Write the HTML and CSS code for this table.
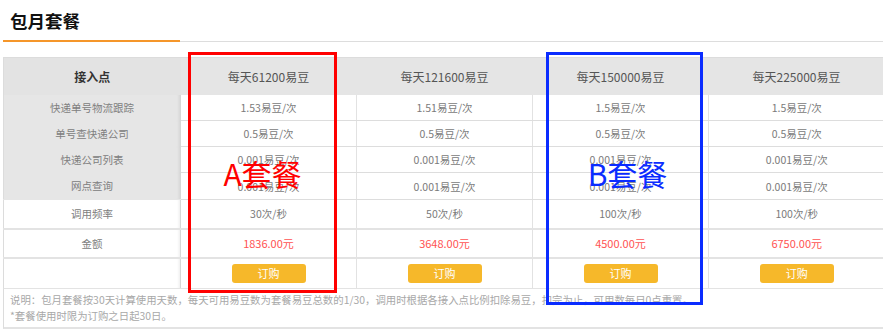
FILE: index.html
```html
<!DOCTYPE html>
<html lang="zh-CN">
<head>
<meta charset="utf-8">
<title>包月套餐</title>
<link rel="stylesheet" href="styles.css">
</head>
<body>
<div class="page">
  <div class="title-bar">
    <h2 class="title">包月套餐</h2>
  </div>
  <div class="plans">
    <table class="plan-table">
      <colgroup>
        <col class="c-label"><col class="c-plan"><col class="c-plan"><col class="c-plan"><col class="c-last">
      </colgroup>
      <thead>
        <tr class="head-row">
          <th class="label head-label">接入点</th>
          <th>每天61200易豆</th>
          <th>每天121600易豆</th>
          <th>每天150000易豆</th>
          <th>每天225000易豆</th>
        </tr>
      </thead>
      <tbody>
        <tr class="r-grey r1">
          <td class="label grey">快递单号物流跟踪</td>
          <td>1.53易豆/次</td><td>1.51易豆/次</td><td>1.5易豆/次</td><td>1.5易豆/次</td>
        </tr>
        <tr class="r-grey">
          <td class="label grey">单号查快递公司</td>
          <td>0.5易豆/次</td><td>0.5易豆/次</td><td>0.5易豆/次</td><td>0.5易豆/次</td>
        </tr>
        <tr class="r-grey">
          <td class="label grey">快递公司列表</td>
          <td>0.001易豆/次</td><td>0.001易豆/次</td><td>0.001易豆/次</td><td>0.001易豆/次</td>
        </tr>
        <tr class="r-grey r4">
          <td class="label grey">网点查询</td>
          <td>0.001易豆/次</td><td>0.001易豆/次</td><td>0.001易豆/次</td><td>0.001易豆/次</td>
        </tr>
        <tr class="r-white">
          <td class="label">调用频率</td>
          <td>30次/秒</td><td>50次/秒</td><td>100次/秒</td><td>100次/秒</td>
        </tr>
        <tr class="r-white">
          <td class="label">金额</td>
          <td class="price">1836.00元</td><td class="price">3648.00元</td><td class="price">4500.00元</td><td class="price">6750.00元</td>
        </tr>
        <tr class="r-white r-btn">
          <td class="label"></td>
          <td><button class="buy">订购</button></td>
          <td><button class="buy">订购</button></td>
          <td><button class="buy">订购</button></td>
          <td><button class="buy">订购</button></td>
        </tr>
      </tbody>
    </table>
    <div class="note">
      <p>说明：包月套餐按30天计算使用天数，每天可用易豆数为套餐易豆总数的1/30，调用时根据各接入点比例扣除易豆，扣完为止，可用数每日0点重置。</p>
      <p>*套餐使用时限为订购之日起30日。</p>
    </div>
    <div class="mark mark-a"><span>A套餐</span></div>
    <div class="mark mark-b"><span>B套餐</span></div>
  </div>
</div>
</body>
</html>
```

FILE: styles.css
```css
* { box-sizing: border-box; }
html, body { margin: 0; padding: 0; background: #fff; }
body {
  font-family: "Noto Sans CJK SC", "Noto Sans", sans-serif;
  color: #666;
}
.page {
  width: 883px;
  padding-left: 3px;
  overflow: hidden;
}
.title-bar {
  border-bottom: 1px solid #dddddd;
  height: 42px;
  display: flex;
}
.title {
  margin: 0 0 -1px 0;
  width: 177px;
  height: 42px;
  padding: 9px 0 0 7px;
  font-size: 17.5px;
  font-weight: bold;
  line-height: 24px;
  color: #111;
  border-bottom: 2px solid #f5962a;
}
.plans {
  position: relative;
  margin-top: 15px;
}
.plan-table {
  width: 881px;
  border-collapse: collapse;
  table-layout: fixed;
  border-top: 1px solid #dcdcdc;
  border-left: 1px solid #dcdcdc;
}
.c-label { width: 177px; }
.c-plan { width: 176px; }
.c-last { width: 176px; }
th, td {
  padding: 0;
  text-align: center;
  vertical-align: middle;
  font-weight: normal;
}
.head-row th {
  height: 37px;
  background: #e5e5e5;
  font-size: 12px;
  color: #555;
}
.head-row .head-label {
  font-weight: bold;
  color: #333;
  background: #e3e3e3;
}
tbody td {
  font-size: 10.5px;
  color: #7a7a7a;
  border-bottom: 1px solid #dddddd;
  border-left: 1px solid #e2e2e2;
}
.r-grey td { height: 26px; }
.r4 td { height: 27px; }
.r-white td { height: 29px; border-bottom: 2px solid #e3e3e3; }
.r-btn td { height: 30px; border-bottom: 0; }
td.label {
  border-left: 0;
  border-right: 1px solid #d6d6d6;
  box-shadow: inset -3px 0 3px -2px rgba(0,0,0,0.08);
  color: #808080;
}
td.grey {
  background: #e6e6e6;
  border-bottom: 0;
}
.r4 td.grey { border-bottom: 1px solid #e6e6e6; }
td.price {
  color: #ff5252;
  font-size: 11px;
}
.buy {
  display: inline-block;
  width: 74px;
  height: 19px;
  border: 0;
  border-radius: 3px;
  background: #f6b82a;
  color: #fff;
  font-family: inherit;
  font-size: 11px;
  line-height: 19px;
  padding: 0;
  vertical-align: middle;
}
.note {
  border-left: 1px solid #dcdcdc;
  border-top: 1px solid #e3e3e3;
  border-bottom: 2px solid #e3e3e3;
  padding: 3px 0 3px 6px;
  width: 880px;
}
.note p {
  margin: 0;
  font-size: 10.4px;
  line-height: 16px;
  color: #a8a8a8;
  white-space: nowrap;
}
.mark {
  position: absolute;
  top: -5px;
  display: flex;
  justify-content: center;
  align-items: center;
  font-size: 30px;
  line-height: 30px;
  font-weight: normal;
}
.mark-a {
  left: 185px;
  width: 149px;
  height: 241px;
  border: 3px solid #ff0000;
  color: #ff0000;
}
.mark-b {
  left: 543px;
  width: 157px;
  height: 253px;
  border: 3px solid #0a2cff;
  color: #0a2cff;
  padding: 0 0 12px 6px;
}
```
